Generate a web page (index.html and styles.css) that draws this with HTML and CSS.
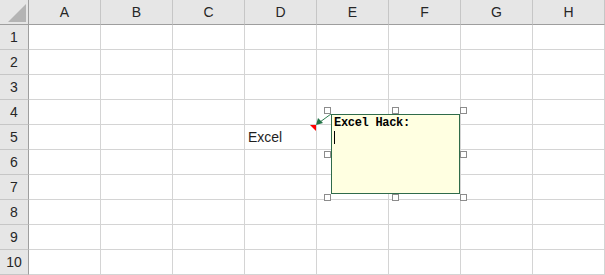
FILE: index.html
```html
<!DOCTYPE html>
<html lang="en">
<head>
  <meta charset="UTF-8" />
  <title>Excel Hack</title>
  <link rel="stylesheet" href="styles.css">
</head>
<body>
  <div class="sheet">
    <div class="grid">
      <div class="corner">
        <svg width="28" height="24" viewBox="0 0 28 24"><polygon points="8,22 26,22 26,4" fill="#b4b4b4"/></svg>
      </div>
      <div class="col-head">A</div>
      <div class="col-head">B</div>
      <div class="col-head">C</div>
      <div class="col-head">D</div>
      <div class="col-head">E</div>
      <div class="col-head">F</div>
      <div class="col-head">G</div>
      <div class="col-head">H</div>

      <div class="row-head">1</div>
      <div class="cell"></div><div class="cell"></div><div class="cell"></div><div class="cell"></div>
      <div class="cell"></div><div class="cell"></div><div class="cell"></div><div class="cell"></div>

      <div class="row-head">2</div>
      <div class="cell"></div><div class="cell"></div><div class="cell"></div><div class="cell"></div>
      <div class="cell"></div><div class="cell"></div><div class="cell"></div><div class="cell"></div>

      <div class="row-head">3</div>
      <div class="cell"></div><div class="cell"></div><div class="cell"></div><div class="cell"></div>
      <div class="cell"></div><div class="cell"></div><div class="cell"></div><div class="cell"></div>

      <div class="row-head">4</div>
      <div class="cell"></div><div class="cell"></div><div class="cell"></div><div class="cell"></div>
      <div class="cell"></div><div class="cell"></div><div class="cell"></div><div class="cell"></div>

      <div class="row-head">5</div>
      <div class="cell"></div><div class="cell"></div><div class="cell"></div>
      <div class="cell text-cell">Excel</div>
      <div class="cell"></div><div class="cell"></div><div class="cell"></div><div class="cell"></div>

      <div class="row-head">6</div>
      <div class="cell"></div><div class="cell"></div><div class="cell"></div><div class="cell"></div>
      <div class="cell"></div><div class="cell"></div><div class="cell"></div><div class="cell"></div>

      <div class="row-head">7</div>
      <div class="cell"></div><div class="cell"></div><div class="cell"></div><div class="cell"></div>
      <div class="cell"></div><div class="cell"></div><div class="cell"></div><div class="cell"></div>

      <div class="row-head">8</div>
      <div class="cell"></div><div class="cell"></div><div class="cell"></div><div class="cell"></div>
      <div class="cell"></div><div class="cell"></div><div class="cell"></div><div class="cell"></div>

      <div class="row-head">9</div>
      <div class="cell"></div><div class="cell"></div><div class="cell"></div><div class="cell"></div>
      <div class="cell"></div><div class="cell"></div><div class="cell"></div><div class="cell"></div>

      <div class="row-head">10</div>
      <div class="cell"></div><div class="cell"></div><div class="cell"></div><div class="cell"></div>
      <div class="cell"></div><div class="cell"></div><div class="cell"></div><div class="cell"></div>
    </div>

    <!-- comment indicator + leader arrow -->
    <svg class="leader" width="40" height="30" viewBox="0 0 40 30">
      <polygon points="4,15 10,15 10,21" fill="#ff0000"/>
      <line x1="25" y1="4" x2="14" y2="12" stroke="#2e7d4f" stroke-width="1"/>
      <polygon points="10,15 12,8 17,13" fill="#217346"/>
    </svg>

    <div class="note">
      <div class="note-title">Excel Hack:</div>
      <div class="note-line"><span class="caret"></span></div>
    </div>

    <span class="handle h-tl"></span>
    <span class="handle h-tm"></span>
    <span class="handle h-tr"></span>
    <span class="handle h-ml"></span>
    <span class="handle h-mr"></span>
    <span class="handle h-bl"></span>
    <span class="handle h-bm"></span>
    <span class="handle h-br"></span>
  </div>
</body>
</html>
```

FILE: styles.css
```css
body {
  margin: 0;
  background: #ffffff;
  font-family: 'Liberation Sans', Arial, sans-serif;
  overflow: hidden;
}
.sheet {
  position: relative;
  width: 605px;
  height: 275px;
}
.grid {
  display: grid;
  grid-template-columns: 29px repeat(8, 72px);
  grid-template-rows: repeat(11, 25px);
}
.grid > div {
  box-sizing: border-box;
}
.corner {
  background: #e6e6e6;
  border-right: 1px solid #9e9e9e;
  border-bottom: 1px solid #9e9e9e;
}
.corner svg {
  display: block;
}
.col-head {
  background: #e6e6e6;
  border-right: 1px solid #c6c6c6;
  border-bottom: 1px solid #9e9e9e;
  display: flex;
  align-items: center;
  justify-content: center;
  font-size: 14px;
  color: #262626;
}
.row-head {
  background: #e6e6e6;
  border-right: 1px solid #9e9e9e;
  border-bottom: 1px solid #c6c6c6;
  display: flex;
  align-items: center;
  justify-content: center;
  font-size: 14px;
  color: #262626;
}
.cell {
  border-right: 1px solid #d4d4d4;
  border-bottom: 1px solid #d4d4d4;
}
.text-cell {
  display: flex;
  align-items: flex-end;
  padding: 0 0 4px 3px;
  font-size: 14px;
  line-height: 16px;
  color: #1f1f1f;
}
.leader {
  position: absolute;
  left: 306px;
  top: 110px;
}
.note {
  position: absolute;
  left: 331px;
  top: 114px;
  width: 129px;
  height: 80px;
  box-sizing: border-box;
  border: 1px solid #2f6b4a;
  background: #ffffe1;
  padding: 2px 0 0 2px;
  font-family: 'Liberation Mono', 'Courier New', monospace;
  font-weight: bold;
  font-size: 12px;
  letter-spacing: -0.3px;
  line-height: 13px;
  color: #000;
}
.note-line {
  height: 13px;
  padding-top: 1px;
}
.caret {
  display: block;
  width: 1px;
  height: 13px;
  background: #000;
}
.handle {
  position: absolute;
  width: 7px;
  height: 7px;
  box-sizing: border-box;
  border: 1px solid #8c8c8c;
  background: #ffffff;
}
.h-tl { left: 324px; top: 107px; }
.h-tm { left: 392px; top: 107px; }
.h-tr { left: 460px; top: 107px; }
.h-ml { left: 324px; top: 151px; }
.h-mr { left: 460px; top: 151px; }
.h-bl { left: 324px; top: 194px; }
.h-bm { left: 392px; top: 194px; }
.h-br { left: 460px; top: 194px; }
```
